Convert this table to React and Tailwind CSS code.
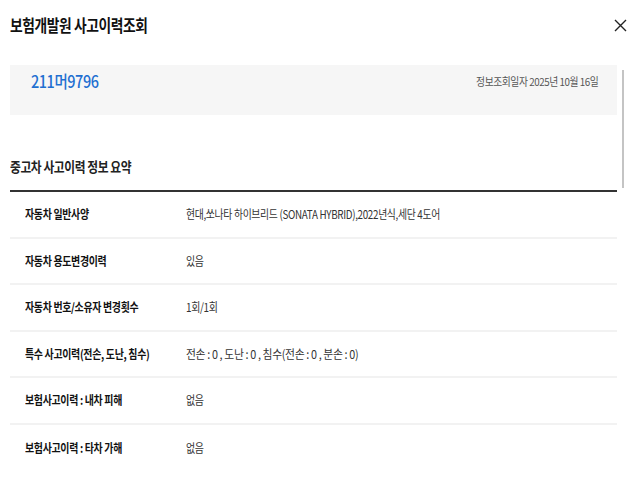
import React from "react";

const rows = [
  ["자동차 일반사양", "현대,쏘나타 하이브리드 (SONATA HYBRID),2022년식,세단 4도어", "scale-x-[0.82]"],
  ["자동차 용도변경이력", "있음", "scale-x-[0.83]"],
  ["자동차 번호/소유자 변경횟수", "1회/1회", "scale-x-[0.83]"],
  ["특수 사고이력(전손, 도난, 침수)", "전손 : 0 , 도난 : 0 , 침수(전손 : 0 , 분손 : 0)", "scale-x-[0.9]"],
  ["보험사고이력 : 내차 피해", "없음", "scale-x-[0.83]"],
  ["보험사고이력 : 타차 가해", "없음", "scale-x-[0.83]"],
];

const App = () => {
  return (
    <div
      className="w-[640px] h-[480px] bg-white overflow-hidden text-[#111]"
      style={{ fontFamily: '"Noto Sans CJK KR", "Noto Sans", sans-serif' }}
    >
      {/* header */}
      <div className="h-[50px] flex items-center justify-between pl-[10px] pr-[13px]">
        <h1 className="text-[17px] font-semibold tracking-[-0.5px] leading-[20px] whitespace-nowrap origin-left scale-x-[0.81]">
          보험개발원 사고이력조회
        </h1>
        <svg width="13" height="13" viewBox="0 0 13 13" className="mt-[1px]">
          <path d="M1 1 L12 12 M12 1 L1 12" stroke="#222" strokeWidth="1.4" />
        </svg>
      </div>

      <div className="flex mt-[15px]">
        <div className="w-[607px] ml-[10px]">
          {/* plate box */}
          <div className="h-[50px] bg-[#f6f6f6] flex justify-between pl-[21px] pr-[19px] pt-[6px]">
            <span className="text-[17px] leading-[20px] font-medium text-[#1f6fd1] tracking-[-0.5px] whitespace-nowrap origin-left scale-x-[0.85]">
              211머9796
            </span>
            <span className="text-[11px] leading-[18px] text-[#555] tracking-[-0.5px] mt-[1px] whitespace-nowrap origin-right scale-x-[0.89]">
              정보조회일자 2025년 10월 16일
            </span>
          </div>

          {/* summary */}
          <h2 className="mt-[41px] text-[14px] leading-[20px] font-semibold tracking-[-0.5px] text-[#222] whitespace-nowrap origin-left scale-x-[0.84]">
            중고차 사고이력 정보 요약
          </h2>
          <div className="mt-[14px] border-t-2 border-[#333]">
            {rows.map(([label, value, sx]) => (
              <div
                key={label}
                className="h-[46.5px] flex items-center border-b-2 border-[#f2f2f2] last:border-b-0 text-[12px] tracking-[-0.4px]"
              >
                <div className="w-[176px] pl-[15px]">
                  <span className="inline-block font-semibold text-[#111] whitespace-nowrap origin-left scale-x-[0.83]">
                    {label}
                  </span>
                </div>
                <span className={"inline-block text-[#333] whitespace-nowrap origin-left " + sx}>
                  {value}
                </span>
              </div>
            ))}
          </div>
        </div>
        <div className="ml-[5px] pt-[5px]">
          <div className="w-[2px] h-[118px] bg-[#c4c4c4]" />
        </div>
      </div>
    </div>
  );
};

export default App;
